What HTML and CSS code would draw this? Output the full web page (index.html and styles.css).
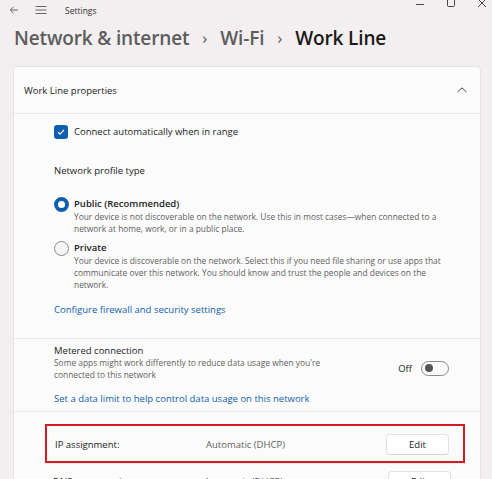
FILE: index.html
```html
<!DOCTYPE html>
<html lang="en">
<head>
<meta charset="utf-8">
<title>Settings</title>
<link rel="stylesheet" href="styles.css">
</head>
<body>
<div class="window">
  <header class="titlebar">
    <svg class="tb-icon back" width="10" height="10" viewBox="0 0 10 10"><path d="M9 5H1.5M4.5 1.8L1.3 5l3.2 3.2" fill="none" stroke="#555" stroke-width="0.9"/></svg>
    <svg class="tb-icon menu" width="12" height="10" viewBox="0 0 12 10"><path d="M0.5 1.5h11M0.5 5h11M0.5 8.5h11" fill="none" stroke="#555" stroke-width="0.9"/></svg>
    <span class="app-name">Settings</span>
    <div class="controls">
      <svg width="10" height="10" viewBox="0 0 10 10"><path d="M1 4.5h8" stroke="#333" stroke-width="0.9"/></svg>
      <svg width="10" height="10" viewBox="0 0 10 10"><rect x="1.5" y="-1.5" width="7" height="8" rx="1" fill="none" stroke="#333" stroke-width="0.9"/></svg>
      <svg width="10" height="10" viewBox="0 0 10 10"><path d="M1 -1l8 8M9 -1l-8 8" stroke="#333" stroke-width="0.9"/></svg>
    </div>
  </header>

  <h1 class="breadcrumb">
    <span class="crumb">Network &amp; internet</span>
    <span class="sep">›</span>
    <span class="crumb">Wi-Fi</span>
    <span class="sep">›</span>
    <span class="crumb current">Work Line</span>
  </h1>

  <section class="card">
    <div class="card-header">
      <span>Work Line properties</span>
      <svg width="12" height="8" viewBox="0 0 12 8"><path d="M1.5 6L6 1.8 10.5 6" fill="none" stroke="#333" stroke-width="0.9"/></svg>
    </div>

    <div class="group first">
      <label class="check-row">
        <span class="checkbox"><svg width="10" height="10" viewBox="0 0 10 10"><path d="M2 5.2l2 2 4-4.4" fill="none" stroke="#fff" stroke-width="1.1"/></svg></span>
        <span>Connect automatically when in range</span>
      </label>

      <div class="label-title">Network profile type</div>

      <div class="radio-option public">
        <span class="radio on"></span>
        <div class="radio-text">
          <div class="opt-title">Public (Recommended)</div>
          <div class="desc">Your device is not discoverable on the network. Use this in most cases—when connected to a network at home, work, or in a public place.</div>
        </div>
      </div>

      <div class="radio-option private">
        <span class="radio"></span>
        <div class="radio-text">
          <div class="opt-title">Private</div>
          <div class="desc">Your device is discoverable on the network. Select this if you need file sharing or use apps that communicate over this network. You should know and trust the people and devices on the network.</div>
        </div>
      </div>

      <a class="link firewall">Configure firewall and security settings</a>
    </div>

    <div class="group metered">
      <div class="metered-row">
        <div class="metered-text">
          <div class="row-title">Metered connection</div>
          <div class="desc">Some apps might work differently to reduce data usage when you're connected to this network</div>
        </div>
        <div class="toggle-wrap">
          <span class="toggle-label">Off</span>
          <span class="toggle"><span class="knob"></span></span>
        </div>
      </div>
      <a class="link datalimit">Set a data limit to help control data usage on this network</a>
    </div>

    <div class="group ip">
      <div class="ip-row highlight">
        <span class="ip-label">IP assignment:</span>
        <span class="ip-value">Automatic (DHCP)</span>
        <button class="edit">Edit</button>
      </div>
      <div class="ip-row">
        <span class="ip-label">DNS server assignment:</span>
        <span class="ip-value">Automatic (DHCP)</span>
        <button class="edit">Edit</button>
      </div>
    </div>
  </section>
</div>
</body>
</html>
```

FILE: styles.css
```css
html, body {
  margin: 0;
  padding: 0;
  height: 100%;
  overflow: hidden;
}
body {
  background: #f3eef0;
  font-family: "Open Sans", "Noto Sans", sans-serif;
  color: #1b1b1b;
}
.window {
  width: 492px;
  height: 479px;
  overflow: hidden;
}
.titlebar {
  display: flex;
  align-items: center;
  height: 20px;
  padding-left: 9px;
}
.tb-icon.back { margin-right: 16px; }
.tb-icon.menu { margin-right: 18px; }
.app-name {
  font-size: 8.5px;
  color: #333;
}
.controls {
  margin-left: auto;
  display: flex;
  gap: 21px;
  align-self: flex-start;
  margin-right: 5px;
}
.breadcrumb {
  margin: 3px 0 0 14px;
  font-size: 19px;
  font-weight: 600;
  line-height: 30px;
  display: flex;
  align-items: center;
  color: #5d5d5d;
  letter-spacing: -0.15px;
}
.breadcrumb .sep {
  margin: 0 13px 0 13px;
  font-size: 17px;
  font-weight: 400;
}
.breadcrumb .current { color: #1a1a1a; }

.card {
  margin: 13px 11px 0 13px;
  background: #fcfbfb;
  border: 1px solid #e8e4e5;
  border-bottom: none;
  border-radius: 4px 4px 0 0;
}
.card-header {
  height: 46px;
  display: flex;
  align-items: center;
  justify-content: space-between;
  padding: 0 12px 0 10px;
  font-size: 9.5px;
  border-bottom: 1px solid #ebe8e9;
}
.group {
  padding-left: 40px;
  padding-right: 31px;
  border-bottom: 1px solid #ebe8e9;
  font-size: 9.5px;
}
.group.first { padding-top: 10px; padding-bottom: 21px; }
.check-row {
  display: flex;
  align-items: center;
  gap: 6px;
  height: 15px;
}
.checkbox {
  width: 14px;
  height: 14px;
  border-radius: 3px;
  background: #0f5fae;
  display: flex;
  align-items: center;
  justify-content: center;
}
.label-title {
  margin-top: 25px;
  line-height: 14px;
}
.radio-option {
  display: flex;
  gap: 5px;
}
.radio-option.public { margin-top: 19px; }
.radio-option.private { margin-top: 6px; }
.radio {
  flex: none;
  width: 15px;
  height: 15px;
  box-sizing: border-box;
  border-radius: 50%;
  border: 1px solid #8a8a8a;
  background: #f6f4f4;
}
.radio.on {
  border: 4px solid #0f5fae;
  background: #fff;
}
.opt-title {
  font-weight: 600;
  line-height: 14px;
}
.desc {
  font-size: 8.4px;
  line-height: 12px;
  color: #5f5f5f;
}
.link {
  display: block;
  color: #0f5fa8;
  line-height: 14px;
}
.link.firewall { margin-top: 12px; }

.group.metered { padding-top: 5px; padding-bottom: 5px; }
.metered-row {
  display: flex;
  align-items: center;
  justify-content: space-between;
}
.metered-text { width: 280px; }
.row-title { line-height: 13px; }
.toggle-wrap {
  display: flex;
  align-items: center;
  gap: 9px;
  margin-top: 11px;
}
.toggle-label { font-size: 9.5px; }
.toggle {
  width: 28px;
  height: 15px;
  box-sizing: border-box;
  border: 1px solid #8a8a8a;
  border-radius: 8px;
  display: flex;
  align-items: center;
  padding-left: 3px;
}
.knob {
  width: 8px;
  height: 8px;
  border-radius: 50%;
  background: #555;
}
.link.datalimit { margin-top: 11px; }

.group.ip {
  padding: 12px 0 0 0;
  border-bottom: none;
}
.ip-row {
  display: flex;
  align-items: center;
  height: 35px;
  margin-left: 31px;
  margin-right: 15px;
  padding: 0 14px 0 8px;
  box-sizing: border-box;
  border-top: 1px solid #ebe8e9;
}
.ip-row.highlight {
  height: 39px;
  border: 2px solid #d21b26;
  padding-top: 1px;
}
.ip-label { width: 151px; }
.ip-value { color: #5f5f5f; }
.edit {
  margin-left: auto;
  width: 63px;
  height: 21px;
  font-family: inherit;
  font-size: 9.5px;
  color: #1b1b1b;
  background: #fff;
  border: 1px solid #e3e1e1;
  border-bottom-color: #d4d2d2;
  border-radius: 4px;
}
```
